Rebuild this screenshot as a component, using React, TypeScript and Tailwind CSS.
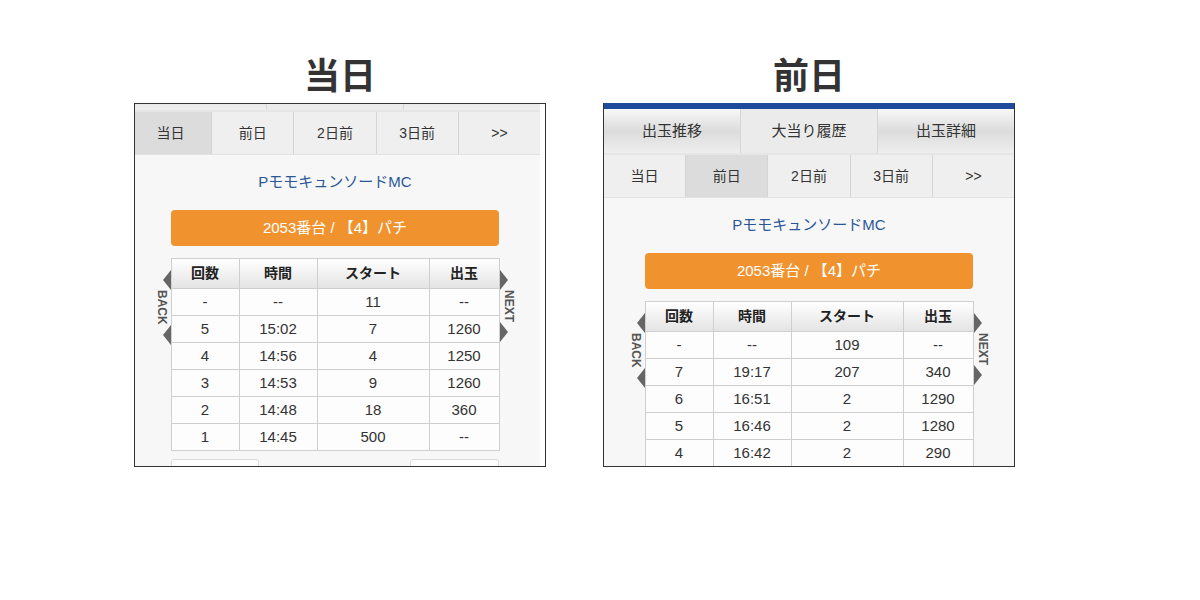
import React from 'react';

// Hit history screens: today's view (scrolled) and previous day view

type Row = [string, string, string, string];

const TODAY_ROWS: Row[] = [
  ['-', '--', '11', '--'],
  ['5', '15:02', '7', '1260'],
  ['4', '14:56', '4', '1250'],
  ['3', '14:53', '9', '1260'],
  ['2', '14:48', '18', '360'],
  ['1', '14:45', '500', '--'],
];

const PREV_ROWS: Row[] = [
  ['-', '--', '109', '--'],
  ['7', '19:17', '207', '340'],
  ['6', '16:51', '2', '1290'],
  ['5', '16:46', '2', '1280'],
  ['4', '16:42', '2', '290'],
];

const MAIN_TABS = ['出玉推移', '大当り履歴', '出玉詳細'];
const DAY_TABS = ['当日', '前日', '2日前', '3日前', '>>'];

// labels are skipped when the row is scrolled out of view
function MainTabs({ labels }: { labels: boolean }) {
  return (
    <div className="flex h-[46px] border-b-2 border-b-[#e6e6e6]">
      {MAIN_TABS.map((t, i) => (
        <div
          key={t}
          className={
            'flex-1 flex items-center justify-center text-[15px] text-[#333] border-r border-r-[#d6d6d6] last:border-r-0 ' +
            (i === 1
              ? 'bg-[#ebebeb]'
              : 'bg-gradient-to-b from-[#f8f8f8] via-[#dcdcdc] to-[#eeeeee]')
          }
        >
          {labels ? t : null}
        </div>
      ))}
    </div>
  );
}

function DayTabs({ active }: { active: number }) {
  return (
    <div className="flex h-[43px] border-b border-b-[#e2e2e2]">
      {DAY_TABS.map((t, i) => (
        <div
          key={t}
          className={
            'flex-1 flex items-center justify-center text-[14px] text-[#333] border-r border-r-[#d4d4d4] last:border-r-0 ' +
            (i === active ? 'bg-[#dcdcdc]' : 'bg-[#efefef]')
          }
        >
          {t}
        </div>
      ))}
    </div>
  );
}

function SideArrow({ dir }: { dir: 'back' | 'next' }) {
  const tri =
    dir === 'back'
      ? 'w-0 h-0 border-y-[10px] border-y-transparent border-r-[8px] border-r-[#666]'
      : 'w-0 h-0 border-y-[10px] border-y-transparent border-l-[8px] border-l-[#666]';
  return (
    <div className={'w-[11px] flex flex-col pt-[12px] ' + (dir === 'back' ? 'items-end' : 'items-start')}>
      <div className={tri} />
      <div className="[writing-mode:vertical-rl] text-[12px] font-bold text-[#555] leading-[12px] py-[3px]">
        {dir === 'back' ? 'BACK' : 'NEXT'}
      </div>
      <div className={tri} />
    </div>
  );
}

function HitTable({ rows }: { rows: Row[] }) {
  const head = ['回数', '時間', 'スタート', '出玉'];
  return (
    <div className="grid grid-cols-[68px_78px_112px_70px] border-l border-t border-[#cfcfcf]">
      {head.map((h) => (
        <div
          key={h}
          className="h-[30px] flex items-center justify-center border-r border-b border-[#cfcfcf] bg-gradient-to-b from-[#ffffff] to-[#e4e4e4] text-[14px] font-bold text-[#222]"
        >
          {h}
        </div>
      ))}
      {rows.map((r, ri) =>
        r.map((c, ci) => (
          <div
            key={ri + '-' + ci}
            className="h-[27px] flex items-center justify-center border-r border-b border-[#cfcfcf] bg-[#fdfdfd] text-[15px] text-[#333]"
          >
            {c}
          </div>
        ))
      )}
    </div>
  );
}

function PageBody({ active, rows, labels }: { active: number; rows: Row[]; labels: boolean }) {
  return (
    <div className="w-[410px] bg-[#f7f7f7]">
      <MainTabs labels={labels} />
      <DayTabs active={active} />
      <div className="flex flex-col items-center pt-[17px] pb-[40px]">
        <div className="h-[20px] leading-[20px] text-[15px] text-[#2b5797]">PモモキュンソードMC</div>
        <div className="mt-[18px] w-[328px] h-[36px] rounded-[4px] bg-[#f0932f] flex items-center justify-center text-[15px] text-white">
          2053番台 / 【4】パチ
        </div>
        <div className="mt-[12px] flex">
          <SideArrow dir="back" />
          <HitTable rows={rows} />
          <SideArrow dir="next" />
        </div>
        <div className="mt-[8px] w-[328px] flex justify-between">
          <div className="w-[88px] h-[30px] rounded-t-[3px] border border-[#dcdcdc] bg-gradient-to-b from-white to-[#ececec]" />
          <div className="w-[89px] h-[30px] rounded-t-[3px] border border-[#dcdcdc] bg-gradient-to-b from-white to-[#ececec]" />
        </div>
      </div>
    </div>
  );
}

export default function App() {
  return (
    <div className="w-[1200px] h-[600px] bg-white font-['Liberation_Sans','Noto_Sans_CJK_JP',sans-serif] pl-[134px] pt-[50px] flex gap-[57px]">
      <div className="w-[412px]">
        <div className="h-[53px] flex items-center justify-center text-[36px] font-bold text-[#333] leading-[53px]">当日</div>
        <div className="h-[364px] border border-[#333] bg-white overflow-hidden">
          <div className="-mt-[38px] -ml-[5px]">
            <PageBody active={0} rows={TODAY_ROWS} labels={false} />
          </div>
        </div>
      </div>
      <div className="w-[412px]">
        <div className="h-[53px] flex items-center justify-center text-[36px] font-bold text-[#333] leading-[53px]">前日</div>
        <div className="h-[364px] border border-[#333] border-t-[#1e4b9c] bg-white overflow-hidden">
          <div className="h-[5px] bg-[#1e4b9c]" />
          <PageBody active={1} rows={PREV_ROWS} labels />
        </div>
      </div>
    </div>
  );
}
